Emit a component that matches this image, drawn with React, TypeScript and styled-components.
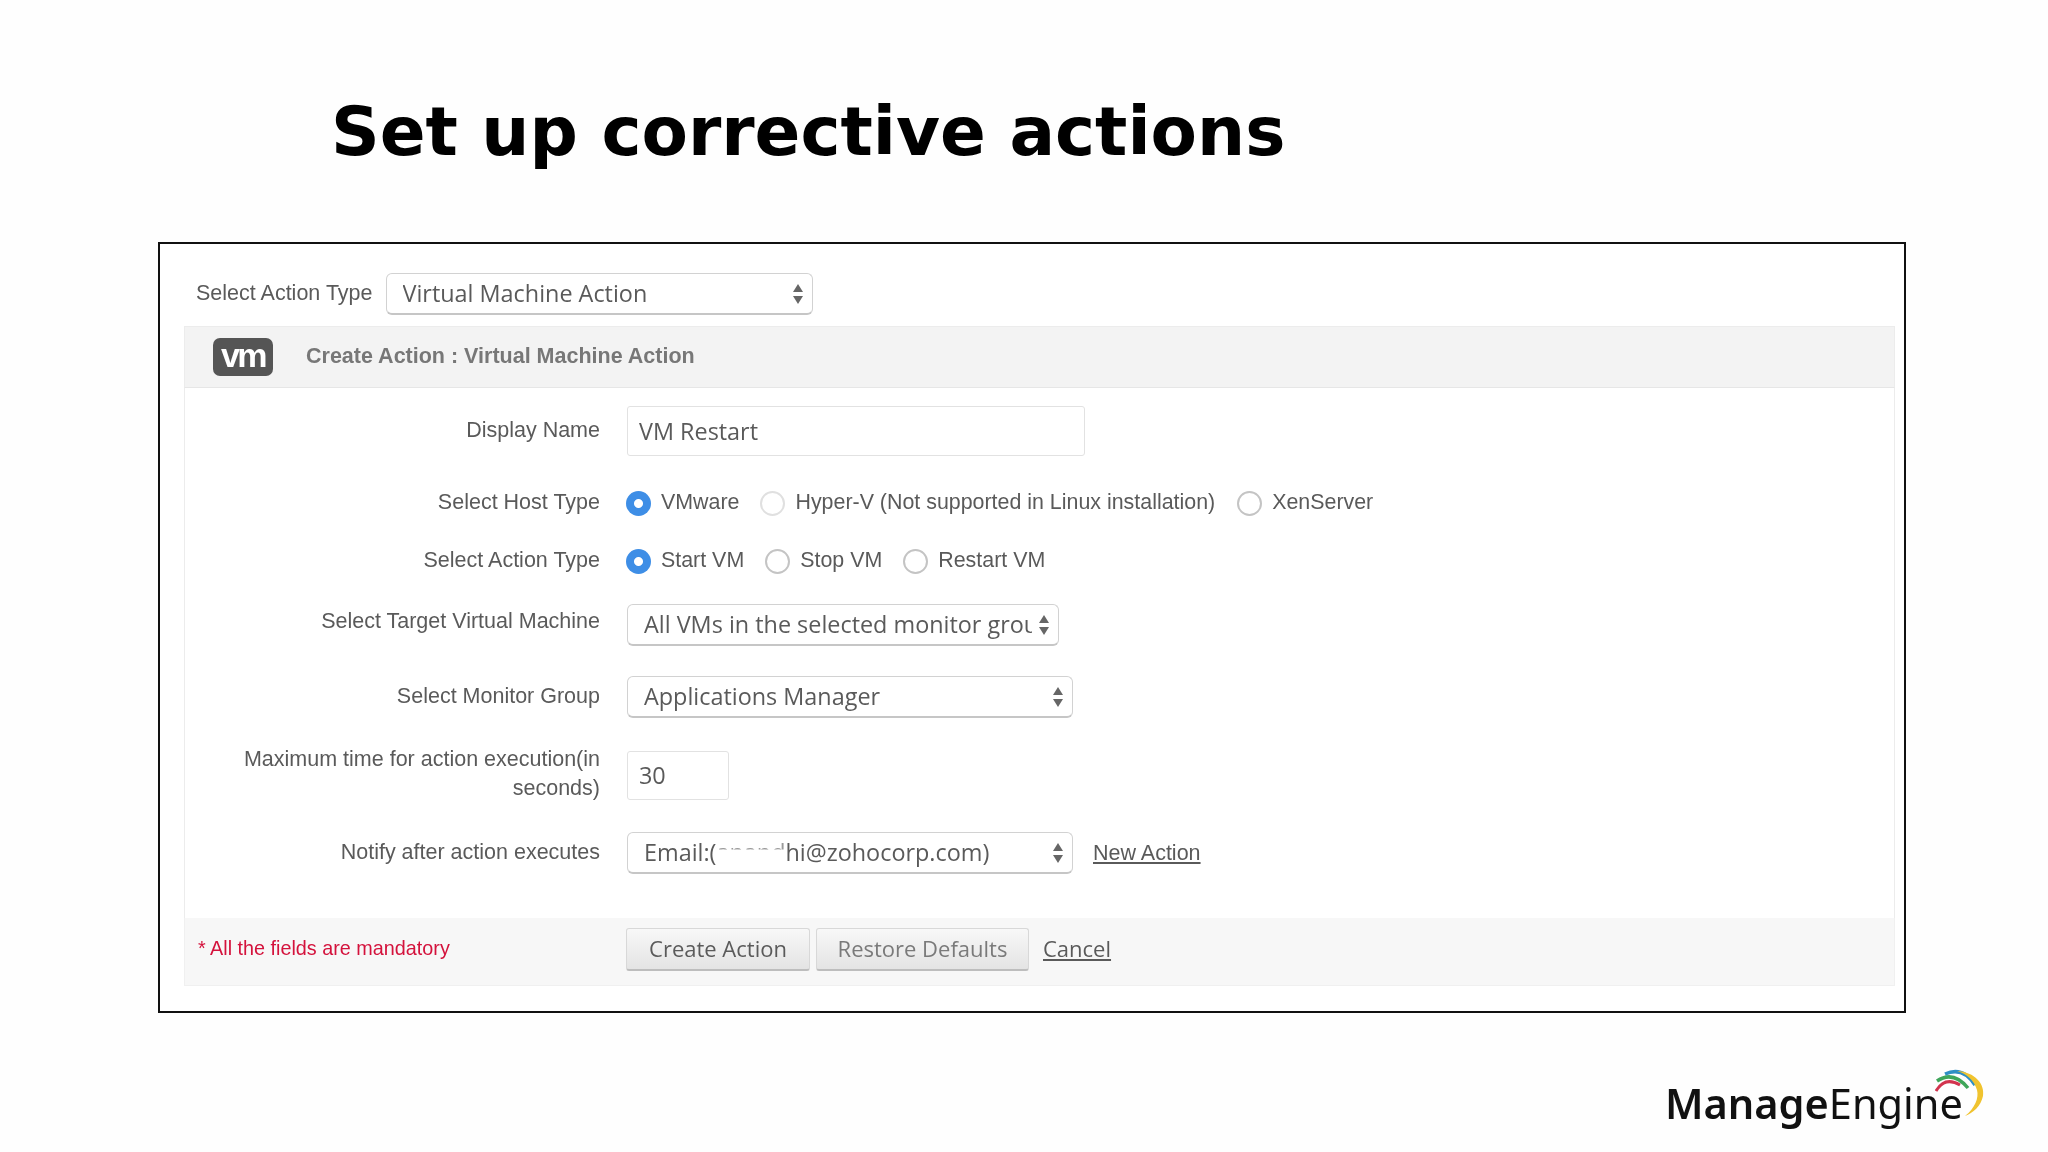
import React from "react";
import styled, { createGlobalStyle } from "styled-components";

const Global = createGlobalStyle`
  html, body { margin: 0; padding: 0; background: #ffffff; }
  * { box-sizing: border-box; }
`;

const Slide = styled.div`
  width: 2048px;
  height: 1152px;
  overflow: hidden;
  background: #fefefe;
  display: flex;
  flex-direction: column;
  font-family: "Liberation Sans", Arial, sans-serif;
  color: #5c5c5c;
  filter: blur(0.6px);
`;

const Title = styled.h1`
  margin: 0;
  height: 242px;
  padding: 91px 0 0 331px;
  font: 700 67.6px/1.2 "DejaVu Sans", Verdana, sans-serif;
  color: #000;
`;

const Frame = styled.section`
  width: 1748px;
  height: 771px;
  margin-left: 158px;
  border: 2px solid #111;
  background: #fff;
  padding: 29px 9px 25px 24px;
  display: flex;
  flex-direction: column;
`;

const TopBar = styled.div`
  display: flex;
  align-items: center;
  height: 42px;
  margin-bottom: 11px;
  padding-left: 12px;
  gap: 13px;
`;

const Label = styled.label<{ $lift?: number }>`
  font-size: 21.5px;
  line-height: 29px;
  color: #5a5a5a;
  padding-bottom: ${(p) => p.$lift ?? 2}px;
`;

const SelectWrap = styled.div<{ $w: number }>`
  position: relative;
  width: ${(p) => p.$w}px;
  height: 42px;
`;

const SelectBox = styled.div`
  width: 100%;
  height: 100%;
  border: 1px solid #d2d2d2;
  border-bottom: 2px solid #c6c6c6;
  border-radius: 6px;
  background: #fff;
  padding: 0 26px 0 16px;
  font: 400 23.4px/39px "Open Sans", sans-serif;
  color: #5a5a5a;
`;

const SelectText = styled.div`
  white-space: nowrap;
  overflow: hidden;
`;

const Arrows = styled.svg`
  position: absolute;
  right: 9px;
  top: 10px;
  width: 12px;
  height: 22px;
`;

const HeaderBand = styled.header`
  height: 62px;
  background: #f3f3f3;
  border: 1px solid #ececec;
  border-bottom-color: #e6e6e6;
  display: flex;
  align-items: center;
  padding-left: 28px;
  gap: 33px;
`;

const VmBadge = styled.span`
  width: 60px;
  height: 38px;
  border-radius: 7px;
  background: #555;
  color: #fff;
  font: 700 34px/34px "Liberation Sans", sans-serif;
  letter-spacing: -2.5px;
  text-align: center;
`;

const HeaderText = styled.h2`
  margin: 0 0 2px;
  font-size: 21.5px;
  font-weight: 700;
  color: #777;
`;

const Body = styled.div`
  flex: 1;
  border-left: 1px solid #ececec;
  border-right: 1px solid #ececec;
  padding-top: 18px;
`;

const Row = styled.div<{ $gap?: number }>`
  display: grid;
  grid-template-columns: 415px 1fr;
  column-gap: 27px;
  align-items: center;
  margin-top: ${(p) => p.$gap ?? 0}px;
`;

const RowLabel = styled(Label)`
  padding-left: 50px;
  text-align: right;
`;

const Controls = styled.div`
  display: flex;
  align-items: center;
`;

const TextBox = styled.input<{ $w: number; $h: number }>`
  width: ${(p) => p.$w}px;
  height: ${(p) => p.$h}px;
  border: 1px solid #e2e2e2;
  border-radius: 3px;
  background: #fff;
  padding: 0 0 0 11px;
  font: 400 23.4px "Open Sans", sans-serif;
  color: #5a5a5a;
  outline: none;
`;

const RadioOption = styled.span<{ $gap?: number }>`
  display: inline-flex;
  align-items: center;
  gap: 10px;
  height: 30px;
  margin-left: ${(p) => p.$gap ?? -1}px;
  font-size: 21.4px;
  color: #5a5a5a;
`;

const RadioText = styled.span`
  padding-bottom: 2px;
`;

const RadioDot = styled.span<{ $on?: boolean; $faint?: boolean }>`
  width: 25px;
  height: 25px;
  flex: none;
  border-radius: 50%;
  background: ${(p) => (p.$on ? "radial-gradient(circle, #fff 0 4px, #3e8ee6 5px)" : "#fff")};
  border: ${(p) => (p.$on ? "none" : `2px solid ${p.$faint ? "#e0e0e0" : "#c4c4c4"}`)};
`;

const PlainLink = styled.a`
  font-size: 21.5px;
  color: #5a5a5a;
  text-decoration: underline;
`;

const NewActionLink = styled(PlainLink)`
  margin-left: 20px;
`;

const Masked = styled.span`
  clip-path: inset(0 0 58% 0);
  color: #9a9a9a;
`;

const FooterBand = styled.footer`
  height: 68px;
  display: grid;
  grid-template-columns: 415px 1fr;
  column-gap: 26px;
  align-items: center;
  background: #f7f7f7;
  border: 1px solid #f0f0f0;
  border-top: none;
  padding-bottom: 4px;
`;

const Mandatory = styled.span`
  padding-left: 13px;
  padding-bottom: 2px;
  font-size: 19.8px;
  color: #d4123c;
`;

const FooterActions = styled.div`
  display: flex;
  align-items: center;
  gap: 6px;
`;

const ActionButton = styled.button<{ $w: number; $muted?: boolean }>`
  width: ${(p) => p.$w}px;
  height: 43px;
  padding: 0 0 2px;
  border: 1px solid #d8d8d8;
  border-bottom: 2px solid #bdbdbd;
  border-radius: 3px;
  background: linear-gradient(#f8f8f8, #e4e4e4);
  font: 400 22px "Open Sans", sans-serif;
  color: ${(p) => (p.$muted ? "#7a7a7a" : "#5a5a5a")};
`;

const CancelLink = styled(PlainLink)`
  margin: 0 0 3px 8px;
  font: 400 22px "Open Sans", sans-serif;
`;

const BrandRow = styled.div`
  flex: 1;
  display: flex;
  justify-content: flex-start;
  padding: 64px 0 0 1665px;
`;

const Brand = styled.div`
  position: relative;
  font: 400 41.5px/52px "Noto Sans", "Open Sans", sans-serif;
  color: #111;
`;

const BrandStrong = styled.span`
  font-weight: 600;
`;

const BrandArcs = styled.svg`
  position: absolute;
  left: 270px;
  top: -11px;
  width: 60px;
  height: 64px;
`;

const SelectArrows = () => (
  <Arrows viewBox="0 0 12 22">
    <path d="M6 1 L11 9 H1 Z M1 13 H11 L6 21 Z" fill="#666" />
  </Arrows>
);

const Select = ({ w, children }: { w: number; children: React.ReactNode }) => (
  <SelectWrap $w={w}>
    <SelectBox>
      <SelectText>{children}</SelectText>
    </SelectBox>
    <SelectArrows />
  </SelectWrap>
);

const Radio = ({ on, faint, gap, text }: { on?: boolean; faint?: boolean; gap?: number; text: string }) => (
  <RadioOption $gap={gap}>
    <RadioDot $on={on} $faint={faint} />
    <RadioText>{text}</RadioText>
  </RadioOption>
);

export default function App() {
  return (
    <Slide>
      <Global />
      <Title>Set up corrective actions</Title>
      <Frame>
        <TopBar>
          <Label>Select Action Type</Label>
          <Select w={427}>Virtual Machine Action</Select>
        </TopBar>
        <HeaderBand>
          <VmBadge>vm</VmBadge>
          <HeaderText>Create Action : Virtual Machine Action</HeaderText>
        </HeaderBand>
        <Body>
          <Row>
            <RowLabel>Display Name</RowLabel>
            <TextBox $w={458} $h={50} defaultValue="VM Restart" />
          </Row>
          <Row $gap={32}>
            <RowLabel>Select Host Type</RowLabel>
            <Controls>
              <Radio on text="VMware" />
              <Radio faint gap={21} text="Hyper-V (Not supported in Linux installation)" />
              <Radio gap={22} text="XenServer" />
            </Controls>
          </Row>
          <Row $gap={27}>
            <RowLabel>Select Action Type</RowLabel>
            <Controls>
              <Radio on text="Start VM" />
              <Radio gap={21} text="Stop VM" />
              <Radio gap={21} text="Restart VM" />
            </Controls>
          </Row>
          <Row $gap={27}>
            <RowLabel $lift={8}>Select Target Virtual Machine</RowLabel>
            <Select w={432}>All VMs in the selected monitor group</Select>
          </Row>
          <Row $gap={30}>
            <RowLabel>Select Monitor Group</RowLabel>
            <Select w={446}>Applications Manager</Select>
          </Row>
          <Row $gap={27}>
            <RowLabel>Maximum time for action execution(in seconds)</RowLabel>
            <TextBox $w={102} $h={49} defaultValue="30" />
          </Row>
          <Row $gap={27}>
            <RowLabel>Notify after action executes</RowLabel>
            <Controls>
              <Select w={446}>Email:(<Masked>anan</Masked><Masked>d</Masked>hi@zohocorp.com)</Select>
              <NewActionLink>New Action</NewActionLink>
            </Controls>
          </Row>
        </Body>
        <FooterBand>
          <Mandatory>* All the fields are mandatory</Mandatory>
          <FooterActions>
            <ActionButton $w={184}>Create Action</ActionButton>
            <ActionButton $w={213} $muted>Restore Defaults</ActionButton>
            <CancelLink>Cancel</CancelLink>
          </FooterActions>
        </FooterBand>
      </Frame>
      <BrandRow>
        <Brand>
          <BrandStrong>Manage</BrandStrong>Engine
          <BrandArcs viewBox="0 -4 60 64" fill="none">
            <path d="M1 21 Q10 6 25 15" stroke="#d2344e" strokeWidth="3" />
            <path d="M2 11 Q18 0 33 18" stroke="#3fa65a" strokeWidth="3.5" />
            <path d="M10 4 Q28 -4 40 15" stroke="#2f8fc4" strokeWidth="3.5" />
            <path d="M22 1 C40 2 50 14 48 26 C46 36 38 43 30 46 C40 38 44 28 42 20 C39 10 32 4 22 1 Z" fill="#f0c32f" />
          </BrandArcs>
        </Brand>
      </BrandRow>
    </Slide>
  );
}
